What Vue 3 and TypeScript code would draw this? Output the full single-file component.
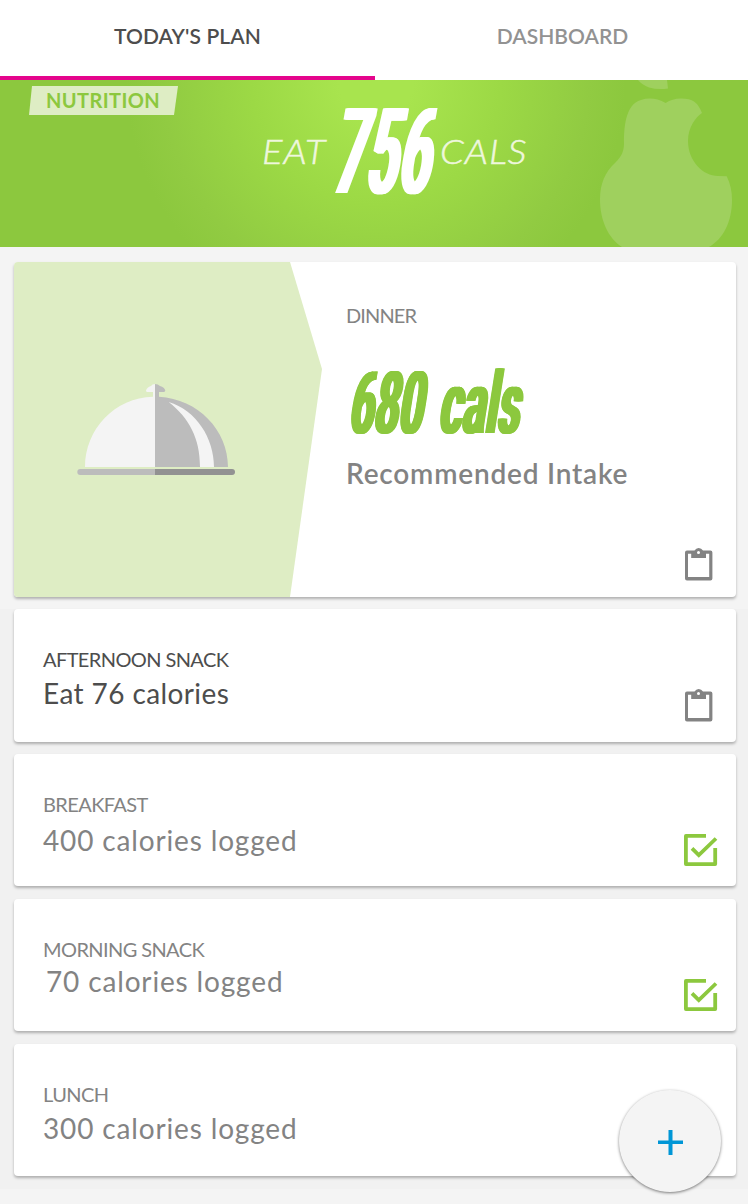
<script setup lang="ts">
interface Meal {
  id: string
  label: string
  text: string
  state: 'open' | 'done' | 'none'
}

const meals: Meal[] = [
  { id: 'afternoon', label: 'AFTERNOON SNACK', text: 'Eat 76 calories', state: 'open' },
  { id: 'breakfast', label: 'BREAKFAST', text: '400 calories logged', state: 'done' },
  { id: 'morning', label: 'MORNING SNACK', text: '70 calories logged', state: 'done' },
  { id: 'lunch', label: 'LUNCH', text: '300 calories logged', state: 'none' },
]
</script>

<template>
  <div class="screen">
    <nav class="tabs">
      <div class="tab active"><span>TODAY'S PLAN</span></div>
      <div class="tab"><span>DASHBOARD</span></div>
    </nav>

    <header class="hero">
      <div class="tag"><span>NUTRITION</span></div>
      <div class="goal">
        <span class="word eat">EAT</span>
        <span class="total"><span class="squeeze">756</span></span>
        <span class="word cals">CALS</span>
      </div>
      <svg class="pear" viewBox="598 80 136 167" width="136" height="167">
        <path d="M638 80Q642 85 649 87.5Q658 90 668 88.5L667 80Z" />
        <path d="M641 100Q653 96 665.7 103Q672 98.5 681 98.5Q690 98.500 694 101.500Q699 105 702 113C696 117 688 127 688 141C688 161 703 176 718 176L726.700 176.300Q732 187 732 200C732 222 723 239 709 247L622 247C608 238 600 220 600 199C600 184 605 172 615 163C622 156 624 151 624 143C624 129 625 104 641 100Z" />
      </svg>
    </header>

    <main class="list">
      <section class="card dinner">
        <svg class="panel" viewBox="14 262 308 335" width="308" height="335">
          <path fill="#deedc4" d="M14 262H290L322 369L290 597H14Z" />
          <path fill="#f4f4f4" d="M155.500 384V467H85C85 429 115 397.500 153 396.700V392H147.500Q146 392 146 390.500Q147 387 151 386Q152 384 155.500 384Z" />
          <path fill="#bcbcbc" d="M155 384Q158 384 160 386Q164.500 387 165.300 390.500Q165 392 163.500 392H159V396.700C198 399 228 430 228 467H155Z" />
          <path fill="#f4f4f4" d="M168.700 402C196 410 214 438 214 467H200C200 438 189 418 168.700 402Z" />
          <path fill="#bcbcbc" d="M155 469H80.300A3 3 0 0 0 80.300 475H155Z" />
          <path fill="#929292" d="M155 469H232A3 3 0 0 1 232 475H155Z" />
        </svg>
        <div class="dinner-info">
          <span class="label dinner-label">DINNER</span>
          <div class="intake">
            <span class="squeeze num">680</span>
            <span class="squeeze unit">cals</span>
          </div>
          <span class="recommended">Recommended Intake</span>
        </div>
        <svg class="icon clipboard" viewBox="0 0 28 33" width="28" height="33">
          <path fill="#838383" fill-rule="evenodd" d="M2 2.500H9.500Q11 0 13.700 0T18 2.500H25.400Q27.400 2.500 27.400 4.500V30.400Q27.400 32.400 25.400 32.400H2Q0 32.400 0 30.400V4.500Q0 2.500 2 2.500ZM3 5.800V29H24.200V5.800H21V10H6.200V5.800ZM13.500 3A1.500 1.500 0 1 0 13.500 6A1.500 1.500 0 1 0 13.500 3Z" />
        </svg>
      </section>

      <section v-for="meal in meals" :key="meal.id" class="card meal" :class="meal.id">
        <span class="label">{{ meal.label }}</span>
        <span class="text">{{ meal.text }}</span>
        <svg v-if="meal.state === 'open'" class="icon clipboard" viewBox="0 0 28 33" width="28" height="33">
          <path fill="#838383" fill-rule="evenodd" d="M2 2.500H9.500Q11 0 13.700 0T18 2.500H25.400Q27.400 2.500 27.400 4.500V30.400Q27.400 32.400 25.400 32.400H2Q0 32.400 0 30.400V4.500Q0 2.500 2 2.500ZM3 5.800V29H24.200V5.800H21V10H6.200V5.800ZM13.500 3A1.500 1.500 0 1 0 13.500 6A1.500 1.500 0 1 0 13.500 3Z" />
        </svg>
        <svg v-if="meal.state === 'done'" class="icon check" viewBox="0 0 34 33" width="34" height="33">
          <path fill="none" stroke="#8cc83e" stroke-width="3.800" stroke-linejoin="round" d="M22 1.900H1.900V30.100H31.200V14" />
          <path fill="none" stroke="#8cc83e" stroke-width="3.800" d="M8 14.300L14.800 21L32 4.500" />
        </svg>
      </section>
    </main>

    <button class="fab" aria-label="Add">
      <svg viewBox="0 0 25 25" width="25" height="25"><path fill="#0096d6" d="M10.500 0H14.500V10.500H25V14H14.500V25H10.500V14H0V10.500H10.500Z" /></svg>
    </button>
  </div>
</template>

<style>
body {
  margin: 0;
  background: #f4f4f4;
}
</style>

<style scoped>
.screen {
  position: relative;
  width: 748px;
  height: 1204px;
  overflow: hidden;
  background: linear-gradient(#f4f4f4 609px, #f1f1f1 609px, #f1f1f1 1189px, #f4f4f4 1189px);
  font-family: Lato, "Open Sans", sans-serif;
  color: #838383;
}
span {
  white-space: nowrap;
}
.tabs {
  display: grid;
  grid-template-columns: 375px 373px;
  height: 80px;
  background: #fff;
}
.tab {
  box-sizing: border-box;
  padding-top: 24px;
  padding-left: 2px;
  text-align: center;
  font-size: 21px;
  font-weight: 600;
  line-height: 23px;
  color: #929292;
}
.tab.active {
  padding-left: 0;
  letter-spacing: 0.1px;
  color: #4d4d4d;
  border-bottom: 4px solid #e4058c;
}
.hero {
  position: relative;
  height: 167px;
  box-sizing: border-box;
  padding: 6px 0 0 29px;
  overflow: hidden;
  background: radial-gradient(circle 250px at 376px 0, #a8e44e 0, #a8e44e 15%, #9cd945 50%, #91cb42 85%, #8cc83e 100%);
}
.tag {
  width: 149px;
  height: 29px;
  background: #deedc4;
  clip-path: polygon(3px 0, 100% 0, 145px 100%, 0 100%);
  color: #8cc83e;
  font-size: 20px;
  font-weight: 700;
  line-height: 28px;
  padding-left: 17px;
  box-sizing: border-box;
  letter-spacing: 0.4px;
}
.goal {
  position: absolute;
  left: 262px;
  top: 20px;
  height: 100px;
  display: flex;
  align-items: flex-start;
  color: #fff;
}
.word {
  font-size: 34px;
  line-height: 40px;
  font-style: italic;
  font-weight: 300;
  margin-top: 31px;
  color: #eef7dd;
  letter-spacing: 0.8px;
  transform: scaleX(1.12);
  transform-origin: 0 50%;
  -webkit-text-stroke: 0.5px #eef7dd;
}
.eat {
  width: 70px;
}
.total {
  width: 108px;
  height: 100px;
}
.squeeze {
  display: inline-block;
  font-family: Roboto, sans-serif;
  font-weight: 500;
  transform-origin: 0 100%;
}
.total .squeeze {
  font-size: 119px;
  line-height: 86px;
  height: 86px;
  margin-top: 10px;
  margin-left: -1px;
  letter-spacing: 4px;
  transform: skewX(-10deg) scaleX(0.455);
  text-shadow: 2px 0, -2px 0, 4px 0, -4px 0, 6px 0, -6px 0;
}
.pear {
  position: absolute;
  left: 598px;
  top: 0;
  fill: #9fd05e;
}
.list {
  display: flex;
  flex-direction: column;
  gap: 12px;
  padding: 15px 12px 0 14px;
}
.card {
  position: relative;
  background: #fff;
  border-radius: 4px;
  box-shadow: 0 2px 3px rgba(0, 0, 0, 0.28);
}
.dinner {
  height: 335px;
  display: flex;
}
.panel {
  flex: none;
  border-radius: 4px 0 0 4px;
}
.dinner-info {
  display: flex;
  flex-direction: column;
  padding: 41px 0 0 24px;
}
.label {
  font-size: 20px;
  line-height: 24px;
  letter-spacing: -0.6px;
}
.dinner-label {
  letter-spacing: -0.9px;
}
.intake {
  height: 64px;
  margin-top: 45px;
  display: flex;
  color: #8cc83e;
}
.intake .squeeze {
  font-size: 86px;
  line-height: 64px;
  height: 64px;
  transform: skewX(-9deg) scaleX(0.475);
  letter-spacing: 3px;
  text-shadow: 2px 0, -2px 0, 4px 0, -4px 0, 5px 0, -5px 0;
}
.num {
  width: 90px;
  margin-left: 2px;
}
.recommended {
  font-size: 28px;
  font-weight: 600;
  line-height: 34px;
  margin-top: 20px;
  letter-spacing: 0.8px;
}
.meal {
  height: 132px;
  margin-bottom: 1px;
  box-sizing: border-box;
  padding: 38px 0 0 29px;
  display: flex;
  flex-direction: column;
}
.text {
  font-size: 28px;
  line-height: 34px;
  margin-top: 5px;
  letter-spacing: 0.850px;
}
.afternoon {
  height: 133px;
  margin-bottom: 0;
  color: #4d4d4d;
}
.afternoon .text {
  letter-spacing: 0.400px;
}
.breakfast .text {
  margin-top: 7px;
}
.morning .text {
  margin-top: 3px;
  margin-left: 3px;
}
.icon {
  position: absolute;
  right: 23px;
  bottom: 16px;
}
.afternoon .clipboard {
  bottom: 20px;
}
.check {
  right: 18px;
  bottom: 19px;
}
.fab {
  position: absolute;
  left: 619px;
  top: 1090px;
  width: 102px;
  height: 102px;
  padding: 3px 0 0;
  border: 0;
  border-radius: 50%;
  background: #f4f4f4;
  box-shadow: 0 1px 3px rgba(0, 0, 0, 0.5);
  display: grid;
  place-items: center;
}
</style>
